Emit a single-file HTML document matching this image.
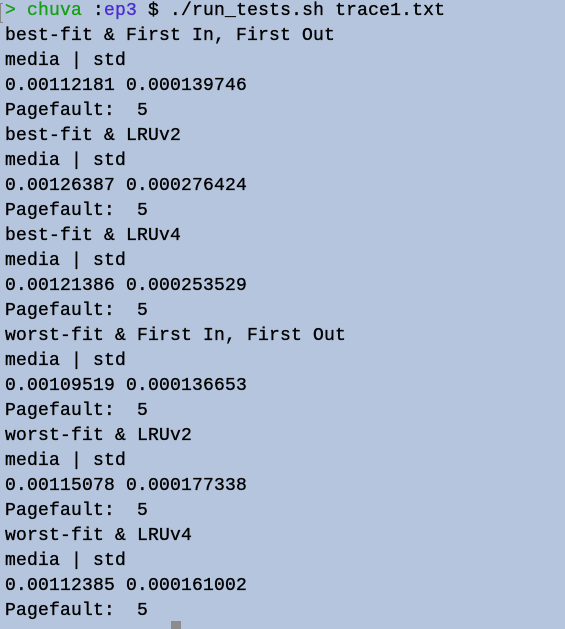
<!DOCTYPE html>
<html><head><meta charset="utf-8"><style>
html,body{margin:0;padding:0;}
body{width:565px;height:627px;overflow:hidden;background:#b5c5dd;position:relative;}
pre{margin:0;position:absolute;left:5px;top:-1px;font-family:"Liberation Mono",monospace;font-size:18px;line-height:25px;color:#000;letter-spacing:0.2px;-webkit-text-stroke:0.35px currentColor;}
.g{color:#16a016}.p{color:#4a2cd0}
.mk{position:absolute;left:0;top:3px;width:2px;height:18px;border-left:1px solid #888;border-top:1px solid #888;border-bottom:1px solid #888;}
.cur{position:absolute;left:171px;top:621px;width:10px;height:8px;background:#8c8c8c;}
</style></head><body>
<div class="mk"></div>
<pre><span class="g">&gt; chuva</span> :<span class="p">ep3</span> $ ./run_tests.sh trace1.txt
best-fit &amp; First In, First Out
media | std
0.00112181 0.000139746
Pagefault:  5
best-fit &amp; LRUv2
media | std
0.00126387 0.000276424
Pagefault:  5
best-fit &amp; LRUv4
media | std
0.00121386 0.000253529
Pagefault:  5
worst-fit &amp; First In, First Out
media | std
0.00109519 0.000136653
Pagefault:  5
worst-fit &amp; LRUv2
media | std
0.00115078 0.000177338
Pagefault:  5
worst-fit &amp; LRUv4
media | std
0.00112385 0.000161002
Pagefault:  5</pre>
<div class="cur"></div>
</body></html>
